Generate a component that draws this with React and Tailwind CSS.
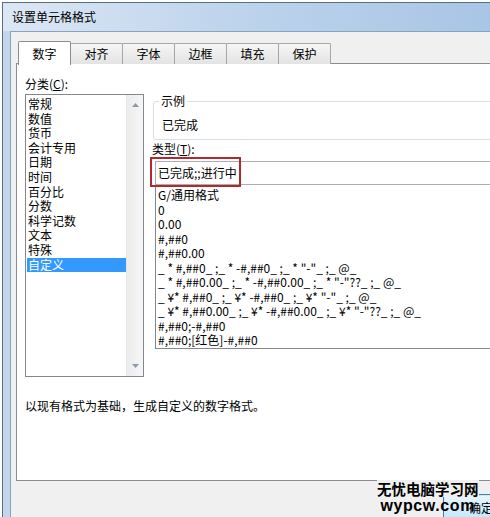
import React from 'react'

const CATEGORIES = ['常规', '数值', '货币', '会计专用', '日期', '时间', '百分比', '分数', '科学记数', '文本', '特殊', '自定义']

const FORMATS = [
  'G/通用格式',
  '0',
  '0.00',
  '#,##0',
  '#,##0.00',
  '_ * #,##0_ ;_ * -#,##0_ ;_ * "-"_ ;_ @_',
  '_ * #,##0.00_ ;_ * -#,##0.00_ ;_ * "-"??_ ;_ @_',
  '_ ¥* #,##0_ ;_ ¥* -#,##0_ ;_ ¥* "-"_ ;_ @_',
  '_ ¥* #,##0.00_ ;_ ¥* -#,##0.00_ ;_ ¥* "-"??_ ;_ @_',
  '#,##0;-#,##0',
  '#,##0;[红色]-#,##0',
]

const TABS = ['数字', '对齐', '字体', '边框', '填充', '保护']

function Arrow({ up }) {
  return (
    <svg width="7" height="4" viewBox="0 0 7 4" className="block">
      <path d={up ? 'M0 4 L3.5 0 L7 4 Z' : 'M0 0 L3.5 4 L7 0 Z'} fill="#8d9aa8" />
    </svg>
  )
}

function Tab({ label, active }) {
  if (active) {
    return (
      <div className="relative z-10 w-[53px] h-[24px] -mb-px bg-white border border-b-0 border-[#898c95] rounded-t-[2px] flex items-center justify-center">
        {label}
      </div>
    )
  }
  return (
    <div className="w-[53px] h-[21px] -ml-px bg-linear-to-b from-[#f6f6f6] to-[#e3e3e3] border border-b-0 border-[#a3a6ad] rounded-t-[2px] flex items-center justify-center first:ml-0">
      {label}
    </div>
  )
}

export default function App() {
  return (
    <div className="relative w-[490px] h-[517px] overflow-hidden bg-white pt-[2px] pl-[2px] text-[12px] leading-[14px] text-black font-['Noto_Sans_CJK_SC',sans-serif]">
      <div className="h-full flex flex-col border-t border-l border-[#5d6d80] bg-[#c2d6ec]">
        {/* title bar */}
        <div className="h-[28px] shrink-0 pl-[9px] flex items-center bg-linear-to-r from-[#dce7f4] via-[#bcd3eb] to-[#a9c5e5] text-[12px]">
          设置单元格格式
        </div>

        <div className="flex-1 flex pl-[7px]">
          {/* client area */}
          <div className="flex-1 border-t border-l border-[#8aa2bd] bg-[#f0f0f0] pt-[8px] pl-[6px]">
            {/* tabs */}
            <div className="flex items-end h-[24px] ml-px">
              {TABS.map((t, i) => (
                <Tab key={t} label={t} active={i === 0} />
              ))}
            </div>

            {/* tab panel */}
            <div className="-ml-px -mt-px w-[500px] h-[418px] bg-white border border-[#898c95] pl-[8px]">
              <div className="flex">
                {/* category column */}
                <div className="w-[119px] shrink-0">
                  <div className="mt-[13px] h-[14px]">
                    分类(<span className="underline">C</span>):
                  </div>
                  <div className="mt-[3px] h-[283px] flex border border-[#828790] bg-white">
                    <div className="flex-1 pt-[2px] pl-px">
                      {CATEGORIES.map((c, i) => (
                        <div
                          key={c}
                          className={`leading-[14.6px] pl-px ${i === CATEGORIES.length - 1 ? 'bg-[#3399ff] text-white' : ''}`}
                        >
                          {c}
                        </div>
                      ))}
                    </div>
                    {/* scrollbar */}
                    <div className="w-[17px] flex flex-col justify-between items-center bg-linear-to-r from-[#ececec] to-[#f6f6f6] border-l border-[#e6e6e6] py-[8px]">
                      <Arrow up />
                      <Arrow />
                    </div>
                  </div>
                </div>

                {/* right column */}
                <div className="flex-1 ml-[8px]">
                  {/* sample group */}
                  <div className="relative mt-[37px] ml-px h-[39px] border border-[#d5dfe5] rounded-[3px] pl-[8px] pt-[16px]">
                    <span className="absolute -top-[8px] left-[5px] bg-white px-[2px]">示例</span>
                    已完成
                  </div>

                  <div className="mt-[2px] h-[14px]">
                    类型(<span className="underline">T</span>):
                  </div>

                  {/* type input */}
                  <div className="relative mt-[5px]">
                    <div className="ml-[3px] h-[24px] border border-[#abadb3] flex items-center pl-[2px]">
                      已完成;;进行中
                    </div>
                    <div className="absolute -top-[4px] -left-[2px] w-[91px] h-[30px] border-2 border-[#b3282d]" />
                  </div>

                  {/* format list */}
                  <div className="ml-[3px] -mt-px h-[165px] border border-[#828790] pt-[3px] pl-[2px]">
                    {FORMATS.map((f) => (
                      <div key={f} className="leading-[14.5px] whitespace-pre">
                        {f}
                      </div>
                    ))}
                  </div>
                </div>
              </div>

              <div className="mt-[22px]">以现有格式为基础，生成自定义的数字格式。</div>
            </div>

            {/* buttons row */}
            <div className="mt-[13px] ml-[426px]">
              <div className="w-[76px] h-[28px] rounded-[3px] border border-[#3c7fb1] bg-linear-to-b from-[#eaf6fd] to-[#bee6fd] shadow-[inset_0_0_0_1px_#cdeaf9] flex items-center justify-center">
                确定
              </div>
            </div>
          </div>
        </div>
      </div>

      {/* site watermark */}
      <div className="absolute left-[377px] top-[480px] flex flex-col items-center font-bold text-black">
        <div className="bg-[#f0f0f0] text-[14.5px] leading-[17px] font-['Noto_Sans_CJK_SC',sans-serif]">无忧电脑学习网</div>
        <div className="text-[16px] leading-[17px] tracking-[0.6px] font-['Liberation_Sans',sans-serif]">wypcw.com</div>
      </div>
    </div>
  )
}
